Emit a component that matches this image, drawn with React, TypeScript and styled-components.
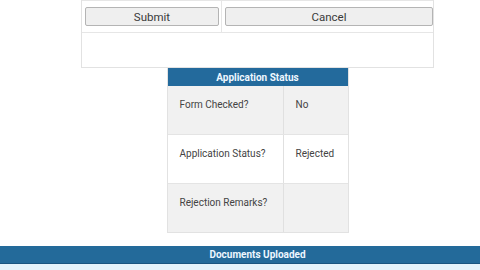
import React from 'react';
import styled, { createGlobalStyle } from 'styled-components';

const GlobalStyle = createGlobalStyle`
  html, body {
    margin: 0;
    padding: 0;
    background: #ffffff;
    font-family: Roboto, "Liberation Sans", Arial, sans-serif;
  }
`;

const Page = styled.div`
  width: 480px;
  height: 270px;
  overflow: hidden;
  display: flex;
  flex-direction: column;
`;

const Main = styled.div`
  display: flex;
  flex-direction: column;
  align-items: center;
  padding-left: 35px;
`;

const FormTable = styled.div`
  width: 353px;
  border: 1px solid #e2e2e2;
  border-top: none;
  box-sizing: border-box;
`;

const ButtonRow = styled.div`
  display: grid;
  grid-template-columns: 139px 1fr;
  border-top: 1px solid #e6e6e6;
  border-bottom: 1px solid #e6e6e6;
  height: 33px;
  box-sizing: border-box;
`;

const ButtonCell = styled.div<{ $divider?: boolean }>`
  display: flex;
  align-items: center;
  padding: 0 ${p => (p.$divider ? '0px' : '2px')} 0 3px;
  border-left: ${p => (p.$divider ? '1px solid #e6e6e6' : 'none')};
`;

const Button = styled.button`
  width: 100%;
  height: 19px;
  background: #efefef;
  border: 1px solid #b4b4b4;
  border-radius: 2px;
  font-family: Roboto, "Liberation Sans", Arial, sans-serif;
  font-size: 11.5px;
  color: #3a3a3a;
  padding: 0;
`;

const EmptyRow = styled.div`
  height: 34px;
`;

const StatusTable = styled.div`
  width: 182px;
  border: 1px solid #e2e2e2;
  border-top: none;
  box-sizing: border-box;
`;

const Header = styled.div`
  height: 18px;
  background: #236a9c;
  color: #eef7ff;
  font-size: 10px;
  font-weight: 700;
  display: flex;
  align-items: center;
  justify-content: center;
`;

const Row = styled.div<{ $shade?: boolean }>`
  display: grid;
  grid-template-columns: 116px 1fr;
  height: 48px;
  background: ${p => (p.$shade ? '#f1f1f1' : '#ffffff')};
  & + & {
    border-top: 1px solid #e4e4e4;
  }
`;

const Cell = styled.div<{ $left?: boolean }>`
  padding: 13px 0 0 12px;
  font-size: 10px;
  color: #444;
  border-right: ${p => (p.$left ? '1px solid #e0e0e0' : 'none')};
`;

const DocsBar = styled.div`
  margin-top: 13px;
  height: 19px;
  background: #236a9a;
  border-bottom: 1px solid #1a5580;
  color: #eef7ff;
  font-size: 10px;
  font-weight: 700;
  display: flex;
  align-items: center;
  justify-content: center;
  padding-left: 35px;
`;

const DocsStrip = styled.div`
  height: 6px;
  background: #e4f3fb;
`;

const rows = [
  { label: 'Form Checked?', value: 'No', shade: true },
  { label: 'Application Status?', value: 'Rejected', shade: false },
  { label: 'Rejection Remarks?', value: '', shade: true },
];

const App: React.FC = () => {
  return (
    <Page>
      <GlobalStyle />
      <Main>
        <FormTable>
          <ButtonRow>
            <ButtonCell>
              <Button>Submit</Button>
            </ButtonCell>
            <ButtonCell $divider>
              <Button>Cancel</Button>
            </ButtonCell>
          </ButtonRow>
          <EmptyRow />
        </FormTable>
        <StatusTable>
          <Header>Application Status</Header>
          {rows.map(r => (
            <Row key={r.label} $shade={r.shade}>
              <Cell $left>{r.label}</Cell>
              <Cell>{r.value}</Cell>
            </Row>
          ))}
        </StatusTable>
      </Main>
      <DocsBar>Documents Uploaded</DocsBar>
      <DocsStrip />
    </Page>
  );
};

export default App;
